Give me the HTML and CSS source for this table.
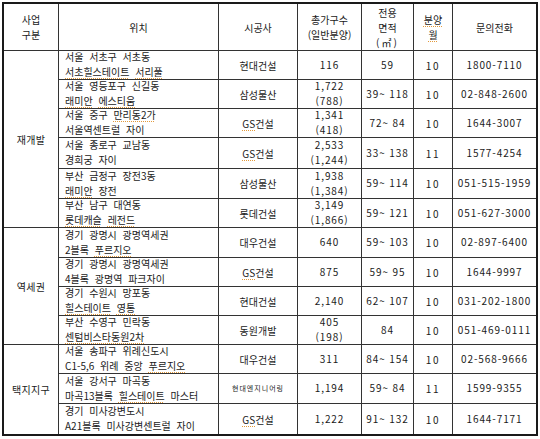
FILE: index.html
```html
<!DOCTYPE html>
<html lang="ko">
<head>
<meta charset="utf-8">
<title>분양 예정 단지</title>
<link rel="stylesheet" href="styles.css">
</head>
<body>
<div class="sheet">
  <div class="c hd"><div>사업<br>구분</div></div>
  <div class="c hd"><div>위치</div></div>
  <div class="c hd"><div>시공사</div></div>
  <div class="c hd"><div>총가구수<br>(일반분양)</div></div>
  <div class="c hd"><div>전용<br>면적<br><span class="sq">(㎡)</span></div></div>
  <div class="c hd"><div><span class="sp">분양</span><br><span class="sp">월</span></div></div>
  <div class="c hd"><div>문의전화</div></div>

  <div class="c grp g1"><div>재개발</div></div>
  <div class="c loc"><div>서울 서초구 서초동<br><span class="sp">서초힐스테이트</span> <span class="sp">서리풀</span></div></div>
  <div class="c co"><div>현대건설</div></div>
  <div class="c num"><div>116</div></div>
  <div class="c num"><div>59</div></div>
  <div class="c num mo"><div>10</div></div>
  <div class="c num"><div>1800-7110</div></div>

  <div class="c loc"><div>서울 영등포구 신길동<br><span class="sp">래미안</span> <span class="sp">에스티움</span></div></div>
  <div class="c co"><div>삼성물산</div></div>
  <div class="c num"><div>1,722<br>(788)</div></div>
  <div class="c num"><div>39~ 118</div></div>
  <div class="c num mo"><div>10</div></div>
  <div class="c num"><div>02-848-2600</div></div>

  <div class="c loc"><div>서울 중구 <span class="sp">만리동2가</span><br>서울역센트럴 자이</div></div>
  <div class="c co"><div><span class="sp">GS</span>건설</div></div>
  <div class="c num"><div>1,341<br>(418)</div></div>
  <div class="c num"><div>72~ 84</div></div>
  <div class="c num mo"><div>10</div></div>
  <div class="c num"><div>1644-3007</div></div>

  <div class="c loc"><div>서울 종로구 교남동<br>경희궁 자이</div></div>
  <div class="c co"><div><span class="sp">GS</span>건설</div></div>
  <div class="c num"><div>2,533<br>(1,244)</div></div>
  <div class="c num"><div>33~ 138</div></div>
  <div class="c num mo"><div>11</div></div>
  <div class="c num"><div>1577-4254</div></div>

  <div class="c loc"><div>부산 금정구 장전3동<br><span class="sp">래미안</span> 장전</div></div>
  <div class="c co"><div>삼성물산</div></div>
  <div class="c num"><div>1,938<br>(1,384)</div></div>
  <div class="c num"><div>59~ 114</div></div>
  <div class="c num mo"><div>10</div></div>
  <div class="c num"><div>051-515-1959</div></div>

  <div class="c loc"><div>부산 남구 대연동<br><span class="sp">롯데캐슬</span> <span class="sp">레전드</span></div></div>
  <div class="c co"><div>롯데건설</div></div>
  <div class="c num"><div>3,149<br>(1,866)</div></div>
  <div class="c num"><div>59~ 121</div></div>
  <div class="c num mo"><div>10</div></div>
  <div class="c num"><div>051-627-3000</div></div>

  <div class="c grp g2"><div>역세권</div></div>
  <div class="c loc"><div>경기 광명시 광명역세권<br>2블록 <span class="sp">푸르지오</span></div></div>
  <div class="c co"><div>대우건설</div></div>
  <div class="c num"><div>640</div></div>
  <div class="c num"><div>59~ 103</div></div>
  <div class="c num mo"><div>10</div></div>
  <div class="c num"><div>02-897-6400</div></div>

  <div class="c loc"><div>경기 광명시 광명역세권<br>4블록 광명역 파크자이</div></div>
  <div class="c co"><div><span class="sp">GS</span>건설</div></div>
  <div class="c num"><div>875</div></div>
  <div class="c num"><div>59~ 95</div></div>
  <div class="c num mo"><div>10</div></div>
  <div class="c num"><div>1644-9997</div></div>

  <div class="c loc"><div>경기 수원시 망포동<br><span class="sp">힐스테이트</span> <span class="sp">영통</span></div></div>
  <div class="c co"><div>현대건설</div></div>
  <div class="c num"><div>2,140</div></div>
  <div class="c num"><div>62~ 107</div></div>
  <div class="c num mo"><div>10</div></div>
  <div class="c num"><div>031-202-1800</div></div>

  <div class="c loc"><div>부산 수영구 민락동<br><span class="sp">센텀비스타동원2차</span></div></div>
  <div class="c co"><div>동원개발</div></div>
  <div class="c num"><div>405<br>(198)</div></div>
  <div class="c num"><div>84</div></div>
  <div class="c num mo"><div>10</div></div>
  <div class="c num"><div>051-469-0111</div></div>

  <div class="c grp g3"><div>택지지구</div></div>
  <div class="c loc"><div>서울 송파구 위례신도시<br>C1-5,6 위례 중앙 <span class="sp">푸르지오</span></div></div>
  <div class="c co"><div>대우건설</div></div>
  <div class="c num"><div>311</div></div>
  <div class="c num"><div>84~ 154</div></div>
  <div class="c num mo"><div>10</div></div>
  <div class="c num"><div>02-568-9666</div></div>

  <div class="c loc"><div>서울 강서구 마곡동<br>마곡13블록 <span class="sp">힐스테이트</span> 마스터</div></div>
  <div class="c co small"><div>현대엔지니어링</div></div>
  <div class="c num"><div>1,194</div></div>
  <div class="c num"><div>59~ 84</div></div>
  <div class="c num mo"><div>11</div></div>
  <div class="c num"><div>1599-9355</div></div>

  <div class="c loc"><div>경기 미사강변도시<br>A21블록 미사강변센트럴 자이</div></div>
  <div class="c co"><div><span class="sp">GS</span>건설</div></div>
  <div class="c num"><div>1,222</div></div>
  <div class="c num"><div>91~ 132</div></div>
  <div class="c num mo"><div>10</div></div>
  <div class="c num"><div>1644-7171</div></div>
</div>
</body>
</html>
```

FILE: styles.css
```css
html, body {
  margin: 0;
  padding: 0;
  background: #ffffff;
}

body {
  font-family: "Noto Sans CJK KR", "Noto Sans", sans-serif;
  font-size: 10px;
  color: #1a1a1a;
}

.sheet {
  margin: 2px 0 0 2px;
  width: 532px;
  display: grid;
  grid-template-columns: 54px 159px 78px 63px 51px 38px 83px;
  grid-template-rows: 46px 28px 28px 28px 30px 29px 28px 29px 28px 28px 28px 28px 29px 30px;
  gap: 1px;
  background: #333333;
  border: 2px solid #1a1a1a;
}

.c {
  background: #ffffff;
  display: flex;
  flex-direction: column;
  justify-content: center;
  align-items: center;
  text-align: center;
  line-height: 15px;
  padding-bottom: 2px;
  box-sizing: border-box;
  white-space: nowrap;
  min-width: 0;
  min-height: 0;
}

.hd {
  padding-bottom: 0;
}

.grp {
  grid-column: 1;
  letter-spacing: 0.3px;
  padding-bottom: 0;
}

.g1 { grid-row: span 6; }
.g2 { grid-row: span 4; }
.g3 { grid-row: span 3; }

.loc {
  align-items: flex-start;
  text-align: left;
  padding-left: 6px;
  word-spacing: 3px;
}

.co {
  padding-bottom: 0;
}

.small {
  font-size: 7px;
  letter-spacing: 1px;
}

.num {
  letter-spacing: 0.9px;
}

.mo {
  letter-spacing: 1.6px;
  padding-bottom: 0;
}

.sq {
  letter-spacing: 2px;
}

.sp {
  text-decoration: underline dotted #e39a3c;
  text-decoration-thickness: 1px;
  text-underline-offset: 2px;
}
```
